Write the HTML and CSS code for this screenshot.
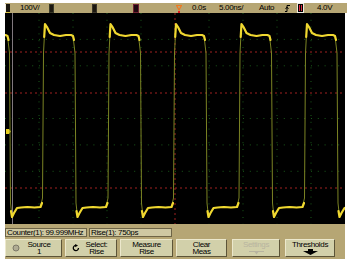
FILE: index.html
```html
<!DOCTYPE html>
<html>
<head>
<meta charset="utf-8">
<link rel="stylesheet" href="styles.css">
</head>
<body>
<div class="scope">
  <div class="topbar">
    <span class="chbox ch1"></span>
    <span class="t vdiv">100V/</span>
    <span class="chbox ch2"></span>
    <span class="chbox ch3"></span>
    <span class="chbox ch4"></span>
    <svg class="tref" width="6" height="10" viewBox="0 0 6 10"><path d="M0.5 2.5 L5.5 2.5 L3 7 Z" fill="none" stroke="#f07820" stroke-width="1.2"/><rect x="2" y="8" width="2" height="2" fill="#e02020"/></svg>
    <span class="t tpos">0.0s</span>
    <span class="t tdiv">5.00ns/</span>
    <span class="t mode">Auto</span>
    <svg class="slope" width="5" height="9" viewBox="0 0 5 9"><path d="M0 7.5 H2 V1.5 H5" fill="none" stroke="#000" stroke-width="1"/><path d="M0.5 5 L2 3 L3.5 5" fill="none" stroke="#000" stroke-width="0.9"/></svg>
    <span class="trigsrc"><span class="trigmark"></span></span>
    <span class="t tlevel">4.0V</span>
  </div>

  <div class="screen">
    <svg width="340" height="211" viewBox="0 0 340 211">
      <defs>
        <g id="period">
          <path class="edge" d="M-0.5 185 L0.5 40 L2 11 L4 14 L7 20 L11 22 L17 23 L23 22 L28 22 L30 23 L32 40 L33 190 L34.5 204 L36.5 200 L39.5 195 L43.5 194.5 L50 194 L57 194.5 L63 194 L65 185"/>
          <path class="flat" d="M1.2 24 L2 11 L4 14 L7 20 L11 22 L17 23 L23 22 L28 22 L30 23 L31 27"/>
          <path class="flat" d="M33.5 198 L34.5 204 L36.5 200 L39.5 195 L43.5 194.5 L50 194 L57 194.5 L63 194 L64.5 190"/>
        </g>
      </defs>
      <rect x="0" y="0" width="340" height="211" fill="#000"/>
      <g class="grid">
        <line x1="34" y1="0" x2="34" y2="211"/>
        <line x1="68" y1="0" x2="68" y2="211"/>
        <line x1="102" y1="0" x2="102" y2="211"/>
        <line x1="136" y1="0" x2="136" y2="211"/>
        <line x1="204" y1="0" x2="204" y2="211"/>
        <line x1="238" y1="0" x2="238" y2="211"/>
        <line x1="272" y1="0" x2="272" y2="211"/>
        <line x1="306" y1="0" x2="306" y2="211"/>
        <line x1="0" y1="26.4" x2="340" y2="26.4"/>
        <line x1="0" y1="52.8" x2="340" y2="52.8"/>
        <line x1="0" y1="105.5" x2="340" y2="105.5"/>
        <line x1="0" y1="131.9" x2="340" y2="131.9"/>
        <line x1="0" y1="158.3" x2="340" y2="158.3"/>
      </g>
      <g class="redgrid">
        <line x1="170" y1="0" x2="170" y2="211"/>
        <line x1="0" y1="39" x2="340" y2="39"/>
        <line x1="0" y1="80" x2="340" y2="80"/>
        <line x1="0" y1="175" x2="340" y2="175"/>
      </g>
      <line class="cursor" x1="7.5" y1="0" x2="7.5" y2="211"/>
      <path class="gnd" d="M1 116 H4 L6 118.5 L4 121 H1 Z"/>
      <g class="wave">
        <use href="#period" x="-27.5"/>
        <use href="#period" x="38"/>
        <use href="#period" x="103.5"/>
        <use href="#period" x="169"/>
        <use href="#period" x="234.5"/>
        <use href="#period" x="300"/>
      </g>
    </svg>
  </div>

  <div class="bottom">
    <div class="readouts">
      <div class="field f1">Counter(1): 99.999MHz</div>
      <div class="field f2">Rise(1): 750ps</div>
    </div>
    <div class="keys">
      <div class="key k1">
        <svg class="icon" width="8" height="8" viewBox="0 0 8 8"><circle cx="4" cy="4" r="3" fill="#b0ac94" stroke="#7c7868" stroke-width="1"/></svg>
        <div class="label">Source<br>1</div>
      </div>
      <div class="key k2">
        <svg class="icon" width="8" height="8" viewBox="0 0 8 8"><path d="M6.5 4 A2.6 2.6 0 1 1 4 1.4" fill="none" stroke="#000" stroke-width="1.3"/><path d="M3.2 0 L6 1.5 L3.2 3.2 Z" fill="#000"/></svg>
        <div class="label">Select:<br>Rise</div>
      </div>
      <div class="key k3"><div class="label">Measure<br>Rise</div></div>
      <div class="key k4"><div class="label">Clear<br>Meas</div></div>
      <div class="key k5 disabled">
        <div class="label">Settings
          <svg class="arrow" width="15" height="5" viewBox="0 0 15 5"><path d="M0 1.5 H15" stroke="#b8b4a0" stroke-width="1"/><path d="M5 1 H10 L7.5 4.5 Z" fill="#b8b4a0"/></svg>
        </div>
      </div>
      <div class="key k6">
        <div class="label">Thresholds
          <svg class="arrow" width="15" height="6" viewBox="0 0 15 6"><path d="M5 0 H10 V2 H15 L7.5 6 L0 2 H5 Z" fill="#000"/></svg>
        </div>
      </div>
    </div>
  </div>
</div>
</body>
</html>
```

FILE: styles.css
```css
body {
  margin: 0;
  background: #ffffff;
  font-family: "Liberation Sans", Arial, sans-serif;
}

.scope {
  margin-left: 5px;
  padding-top: 3px;
  width: 342px;
}

.topbar {
  height: 10px;
  width: 342px;
  background: #b6a674;
  display: flex;
  align-items: center;
  font-size: 8px;
  line-height: 10px;
  letter-spacing: -0.3px;
  color: #000;
}

.t {
  display: block;
  white-space: nowrap;
}

.chbox {
  display: block;
  width: 5px;
  height: 9px;
  background: #1c1810;
  box-sizing: border-box;
}

.ch1 { border-left: 1px solid #f4f0e0; border-bottom: 1px solid #d8c040; }
.vdiv { margin-left: 10px; width: 29px; }
.ch2 { border: 1px solid #3a3a28; }
.ch3 { margin-left: 38px; border: 1px solid #3a3428; }
.ch4 { margin-left: 36px; width: 6px; border: 1px solid #702030; background: #200810; }

.tref { display: block; margin-left: 37px; }
.tpos { margin-left: 10px; width: 27px; }
.tdiv { width: 40px; }
.mode { width: 25px; }
.slope { display: block; margin-left: 1px; }
.trigsrc {
  display: block;
  margin-left: 7px;
  width: 7px;
  height: 10px;
  box-sizing: border-box;
  background: #000;
  border: 1px solid #f0ece0;
  position: relative;
}
.trigmark {
  position: absolute;
  left: 1px;
  top: 1px;
  width: 3px;
  height: 6px;
  border-left: 1px solid #e02840;
  border-right: 1px solid #e02840;
  box-sizing: border-box;
}
.tlevel { margin-left: 13px; }

.screen {
  width: 340px;
  height: 211px;
  background: #000;
}

.screen svg { display: block; }

.grid line {
  stroke: #1a5a1a;
  stroke-width: 1;
  stroke-dasharray: 1 5.8;
}

.redgrid line {
  stroke: #a02020;
  stroke-width: 1;
  stroke-dasharray: 2 3;
}

.cursor {
  stroke: #80787e;
  stroke-width: 1;
}

.gnd { fill: #e8d020; }

.edge {
  fill: none;
  stroke: #7c8424;
  stroke-width: 1;
  stroke-linejoin: round;
}

.flat {
  fill: none;
  stroke: #f0d830;
  stroke-width: 2.2;
  stroke-linejoin: round;
  stroke-linecap: round;
}

.bottom {
  width: 340px;
  height: 35px;
  background: #b6a674;
  box-sizing: border-box;
  padding-top: 4px;
}

.readouts {
  display: flex;
  gap: 2px;
  height: 9px;
}

.field {
  box-sizing: border-box;
  height: 9px;
  border: 1px solid #6e6446;
  background: #cfc8a2;
  font-size: 8px;
  line-height: 7px;
  letter-spacing: -0.35px;
  padding-left: 1px;
  white-space: nowrap;
  overflow: hidden;
}

.f1 { width: 82px; }
.f2 { width: 83px; }

.keys {
  margin-top: 2px;
  display: grid;
  grid-template-columns: 57px 52px 53px 51px 50px 52px;
  column-gap: 3px;
  height: 18px;
}

.key {
  box-sizing: border-box;
  height: 18px;
  background: #d2d0aa;
  border-top: 1px solid #ece8cc;
  border-left: 1px solid #ece8cc;
  border-right: 1px solid #5c5438;
  border-bottom: 1px solid #5c5438;
  display: flex;
  align-items: center;
}

.k5 { margin-left: 2px; }
.k6 { margin-left: 2px; }

.icon {
  display: block;
  flex: none;
  margin-left: 6px;
}

.label {
  flex: 1;
  text-align: center;
  font-size: 8px;
  line-height: 7.5px;
  letter-spacing: -0.35px;
  color: #000;
  white-space: nowrap;
}

.k1 .label, .k2 .label { padding-right: 3px; }

.arrow {
  display: block;
  margin: 1px auto 0;
}

.disabled .label { color: #b8b4a0; }
```
